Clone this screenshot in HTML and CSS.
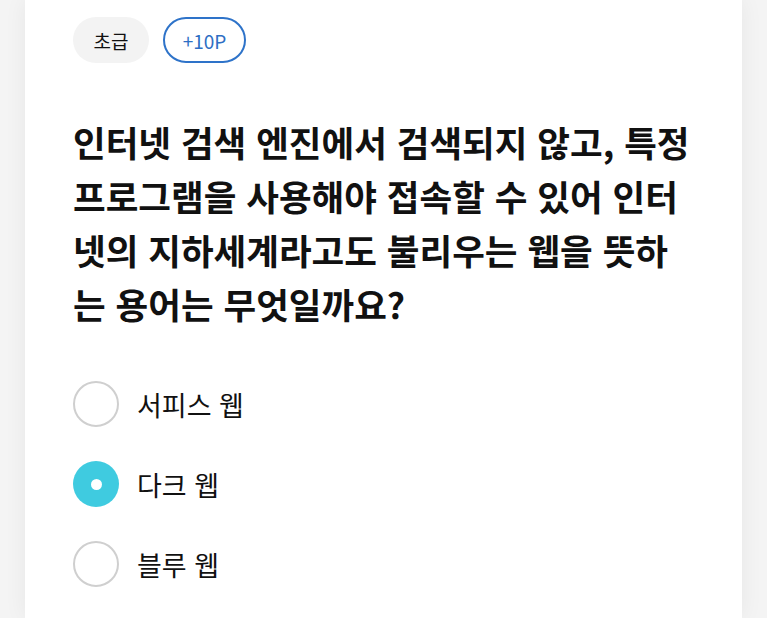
FILE: index.html
```html
<!DOCTYPE html>
<html lang="ko">
<head>
<meta charset="utf-8">
<link rel="stylesheet" href="styles.css">
</head>
<body>
<div class="page">
  <div class="card">
    <div class="tags">
      <span class="tag tag-level">초급</span>
      <span class="tag tag-point">+10P</span>
    </div>
    <h1 class="question">인터넷 검색 엔진에서 검색되지 않고, 특정 프로그램을 사용해야 접속할 수 있어 인터넷의 지하세계라고도 불리우는 웹을 뜻하는 용어는 무엇일까요?</h1>
    <ul class="options">
      <li class="option"><span class="radio"></span><span class="label">서피스 웹</span></li>
      <li class="option selected"><span class="radio"></span><span class="label">다크 웹</span></li>
      <li class="option"><span class="radio"></span><span class="label">블루 웹</span></li>
    </ul>
  </div>
</div>
</body>
</html>
```
FILE: styles.css
```css
html, body {
  margin: 0;
  padding: 0;
}
body {
  background: #f4f4f4;
  font-family: "Noto Sans CJK KR", "Noto Sans", sans-serif;
  color: #111;
}
.page {
  display: flex;
  justify-content: center;
  padding: 0 25px 0 25px;
  width: 767px;
  box-sizing: border-box;
  height: 618px;
  overflow: hidden;
}
.card {
  background: #fff;
  width: 717px;
  box-sizing: border-box;
  padding: 17px 48px 40px 48px;
  box-shadow: 0 0 22px rgba(0,0,0,0.06);
}
.tags {
  display: flex;
  gap: 14px;
}
.tag {
  display: inline-flex;
  align-items: center;
  justify-content: center;
  height: 46px;
  border-radius: 23px;
  font-size: 19px;
  box-sizing: border-box;
}
.tag-level {
  background: #f3f3f3;
  color: #111;
  width: 76px;
}
.tag-point {
  border: 2px solid #2e73c9;
  color: #2e6fc4;
  width: 83px;
}
.question {
  margin: 52px 0 0 0;
  font-size: 35.5px;
  font-weight: 700;
  line-height: 54px;
  letter-spacing: 0;
  color: #111;
}
.options {
  list-style: none;
  margin: 50px 0 0 0;
  padding: 0;
  display: flex;
  flex-direction: column;
  gap: 34px;
}
.option {
  display: flex;
  align-items: center;
  gap: 18px;
  height: 46px;
}
.radio {
  width: 46px;
  height: 46px;
  border-radius: 50%;
  border: 2px solid #cfcfcf;
  box-sizing: border-box;
  background: #fff;
  flex: none;
  display: flex;
  align-items: center;
  justify-content: center;
}
.selected .radio {
  border: none;
  background: #3fcbe0;
}
.selected .radio::after {
  content: "";
  width: 11px;
  height: 11px;
  border-radius: 50%;
  background: #fff;
}
.label {
  font-size: 27px;
  color: #111;
}
```
